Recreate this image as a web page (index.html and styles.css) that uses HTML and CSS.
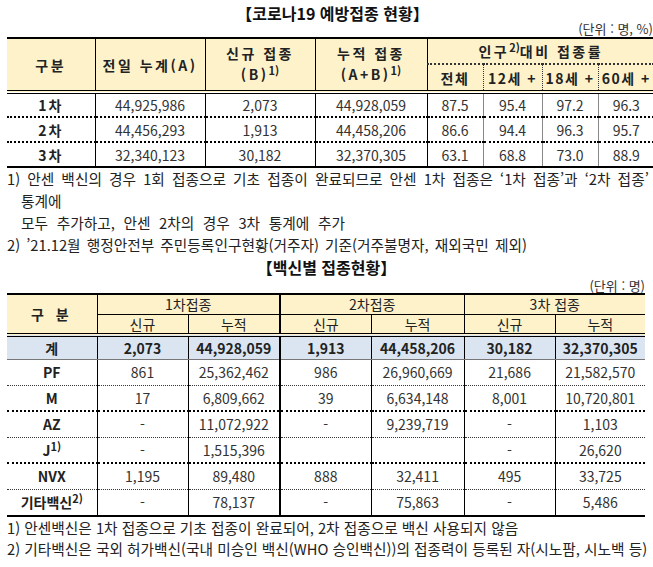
FILE: index.html
```html
<!DOCTYPE html>
<html lang="ko">
<head>
<meta charset="utf-8">
<title>코로나19 예방접종 현황</title>
<link rel="stylesheet" href="styles.css">
</head>
<body>
<div class="page">
  <h1 class="title">【코로나19 예방접종 현황】</h1>
  <div class="unit">(단위 : 명, %)</div>
  <table class="t1">
    <colgroup>
      <col class="c88"><col class="c110"><col class="c110"><col class="c112">
      <col class="c56"><col class="c59"><col class="c56"><col class="c56">
    </colgroup>
    <thead>
      <tr class="hr1">
        <th rowspan="2">구분</th>
        <th rowspan="2">전일 누계(A)</th>
        <th rowspan="2" class="two">신규 접종<br>(B)<sup>1)</sup></th>
        <th rowspan="2" class="two">누적 접종<br>(A+B)<sup>1)</sup></th>
        <th colspan="4" class="pop">인구<sup>2)</sup>대비 접종률</th>
      </tr>
      <tr class="hr2">
        <th class="sub first">전체</th>
        <th class="sub">12세 +</th>
        <th class="sub">18세 +</th>
        <th class="sub">60세 +</th>
      </tr>
    </thead>
    <tbody>
      <tr>
        <td class="lbl">1차</td><td>44,925,986</td><td>2,073</td><td>44,928,059</td>
        <td class="first">87.5</td><td class="sub">95.4</td><td class="sub">97.2</td><td class="sub">96.3</td>
      </tr>
      <tr>
        <td class="lbl">2차</td><td>44,456,293</td><td>1,913</td><td>44,458,206</td>
        <td class="first">86.6</td><td class="sub">94.4</td><td class="sub">96.3</td><td class="sub">95.7</td>
      </tr>
      <tr class="last">
        <td class="lbl">3차</td><td>32,340,123</td><td>30,182</td><td>32,370,305</td>
        <td class="first">63.1</td><td class="sub">68.8</td><td class="sub">73.0</td><td class="sub">88.9</td>
      </tr>
    </tbody>
  </table>
  <div class="notes">
    <p class="fn wide">1) 안센 백신의 경우 1회 접종으로 기초 접종이 완료되므로 안센 1차 접종은 ‘1차 접종’과 ‘2차 접종’</p>
    <p class="fn indent">통계에</p>
    <p class="fn indent wide2">모두 추가하고, 안센 2차의 경우 3차 통계에 추가</p>
    <p class="fn wide3">2) ’21.12월 행정안전부 주민등록인구현황(거주자) 기준(거주불명자, 재외국민 제외)</p>
  </div>
  <h2 class="title2">【백신별 접종현황】</h2>
  <div class="unit2">(단위 : 명)</div>
  <table class="t2">
    <colgroup>
      <col class="d90"><col class="d91"><col class="d92"><col class="d91">
      <col class="d93"><col class="d91"><col class="d90">
    </colgroup>
    <thead>
      <tr class="gr1">
        <th rowspan="2" class="gu">구 분</th>
        <th colspan="2" class="grp">1차접종</th>
        <th colspan="2" class="grp g2">2차접종</th>
        <th colspan="2" class="grp">3차 접종</th>
      </tr>
      <tr class="gr2">
        <th>신규</th><th class="in">누적</th>
        <th class="g2">신규</th><th class="in">누적</th>
        <th>신규</th><th class="in">누적</th>
      </tr>
    </thead>
    <tbody>
      <tr class="total">
        <td class="lbl">계</td><td>2,073</td><td class="in">44,928,059</td>
        <td class="g2">1,913</td><td class="in">44,458,206</td>
        <td>30,182</td><td class="in">32,370,305</td>
      </tr>
      <tr class="thin">
        <td class="lbl">PF</td><td>861</td><td class="in">25,362,462</td>
        <td class="g2">986</td><td class="in">26,960,669</td>
        <td>21,686</td><td class="in">21,582,570</td>
      </tr>
      <tr class="thick">
        <td class="lbl">M</td><td>17</td><td class="in">6,809,662</td>
        <td class="g2">39</td><td class="in">6,634,148</td>
        <td>8,001</td><td class="in">10,720,801</td>
      </tr>
      <tr class="thin">
        <td class="lbl">AZ</td><td>-</td><td class="in">11,072,922</td>
        <td class="g2">-</td><td class="in">9,239,719</td>
        <td>-</td><td class="in">1,103</td>
      </tr>
      <tr class="thick">
        <td class="lbl">J<sup>1)</sup></td><td>-</td><td class="in">1,515,396</td>
        <td class="g2"></td><td class="in"></td>
        <td>-</td><td class="in">26,620</td>
      </tr>
      <tr class="thin">
        <td class="lbl">NVX</td><td>1,195</td><td class="in">89,480</td>
        <td class="g2">888</td><td class="in">32,411</td>
        <td>495</td><td class="in">33,725</td>
      </tr>
      <tr class="end">
        <td class="lbl">기타백신<sup>2)</sup></td><td>-</td><td class="in">78,137</td>
        <td class="g2">-</td><td class="in">75,863</td>
        <td>-</td><td class="in">5,486</td>
      </tr>
    </tbody>
  </table>
  <div class="notes2">
    <p class="fn2">1) 안센백신은 1차 접종으로 기초 접종이 완료되어, 2차 접종으로 백신 사용되지 않음</p>
    <p class="fn2">2) 기타백신은 국외 허가백신(국내 미승인 백신(WHO 승인백신))의 접종력이 등록된 자(시노팜, 시노백 등)</p>
  </div>
</div>
</body>
</html>
```

FILE: styles.css
```css
* { box-sizing: border-box; }

body {
  margin: 0;
  background: #ffffff;
  font-family: "Noto Sans CJK KR", "Malgun Gothic", sans-serif;
  color: #222222;
}

.page {
  width: 653px;
  height: 567px;
  overflow: hidden;
  padding-top: 3px;
}

.title {
  margin: 0;
  font-size: 16px;
  line-height: 20px;
  font-weight: bold;
  text-align: center;
  padding-left: 12px;
  color: #111111;
}

.unit {
  font-size: 13px;
  line-height: 12px;
  text-align: right;
  white-space: nowrap;
  color: #333333;
}

sup {
  font-size: 11px;
  line-height: 0;
  vertical-align: 5px;
  letter-spacing: 0;
}

/* ---------- table 1 ---------- */
.t1 {
  margin: 2px 0 0 7px;
  width: 647px;
  border-collapse: collapse;
  table-layout: fixed;
  border-top: 2px solid #000000;
}

.c88 { width: 88px; }
.c110 { width: 110px; }
.c112 { width: 112px; }
.c56 { width: 56px; }
.c59 { width: 59px; }

.t1 th,
.t1 td {
  padding: 0;
  text-align: center;
  white-space: nowrap;
}

.t1 th {
  background: #fef2cb;
  font-size: 14px;
  font-weight: bold;
  letter-spacing: 2.5px;
  line-height: 20px;
  color: #222222;
  border-left: 1px solid #000000;
  border-bottom: 4px double #000000;
}

.t1 th.two { line-height: 21px; padding-bottom: 2px; }

.t1 th:first-child { border-left: none; }

.t1 .hr1 { height: 26px; }
.t1 .hr2 { height: 28px; }

.t1 th.pop {
  border-bottom: 2px dotted #333333;
  line-height: 20px;
}

.t1 th.sub { border-left: 1px dotted #333333; letter-spacing: 1.5px; }
.t1 th.first { border-left: 1px solid #000000; }

.t1 td {
  height: 25px;
  font-size: 14px;
  line-height: 20px;
  color: #333333;
  border-left: 1px solid #000000;
  border-bottom: 2px dotted #000000;
}

.t1 td:first-child { border-left: none; }
.t1 td.sub { border-left: 1px solid #888888; }
.t1 td.lbl {
  font-weight: bold;
  letter-spacing: 2px;
  color: #222222;
}

.t1 tr.last td { border-bottom: 2px solid #000000; }

/* ---------- notes ---------- */
.notes { padding-left: 7px; }

.fn,
.fn2 {
  margin: 0;
  font-size: 14.7px;
  line-height: 22px;
  white-space: nowrap;
  color: #222222;
}

.fn.wide { word-spacing: 3px; }
.fn.wide2 { word-spacing: 4.5px; }
.fn.wide3 { word-spacing: 2px; }
.fn.indent { padding-left: 14px; }

.title2 {
  margin: 0;
  font-size: 16px;
  line-height: 22px;
  font-weight: bold;
  text-align: center;
  color: #111111;
}

.unit2 {
  font-size: 13px;
  line-height: 13px;
  text-align: right;
  padding-right: 8px;
  margin-top: 1px;
  white-space: nowrap;
  color: #333333;
}

/* ---------- table 2 ---------- */
.t2 {
  margin: 1px 0 0 7px;
  width: 638px;
  border-collapse: collapse;
  table-layout: fixed;
  border-top: 2px solid #000000;
}

.d90 { width: 90px; }
.d91 { width: 91px; }
.d92 { width: 92px; }
.d93 { width: 93px; }

.t2 th,
.t2 td {
  padding: 0;
  text-align: center;
  white-space: nowrap;
  font-size: 14px;
  line-height: 18px;
}

.t2 th {
  background: #fef2cb;
  font-weight: normal;
  color: #222222;
  border-left: 1px solid #000000;
}

.t2 th.gu {
  border-left: none;
  font-weight: bold;
  letter-spacing: 4px;
  border-bottom: 4px double #000000;
}

.t2 .gr1 { height: 20px; }
.t2 .gr2 { height: 21px; }

.t2 th.grp { border-bottom: 1px solid #000000; }
.t2 .gr2 th { border-bottom: 4px double #000000; }
.t2 th.in,
.t2 td.in { border-left: 1px solid #000000; }
.t2 th.g2 { border-left: 2px solid #000000; }

.t2 td {
  height: 26px;
  color: #333333;
  border-left: 1px solid #000000;
}

.t2 td:first-child { border-left: none; }
.t2 td.g2 { border-left: 2px solid #000000; }

.t2 td.lbl {
  font-weight: bold;
  color: #222222;
}

.t2 tr.total td {
  height: 24px;
  background: #dbe5f1;
  font-weight: bold;
  color: #222222;
  border-bottom: 1px solid #777777;
}

.t2 tr.thin td { border-bottom: 1px dotted #333333; }
.t2 tr.thick td { border-bottom: 2px dotted #000000; }
.t2 tr.end td { border-bottom: 2px solid #000000; height: 27px; }

.notes2 { padding-left: 7px; }
.fn2 { line-height: 21px; }
```
